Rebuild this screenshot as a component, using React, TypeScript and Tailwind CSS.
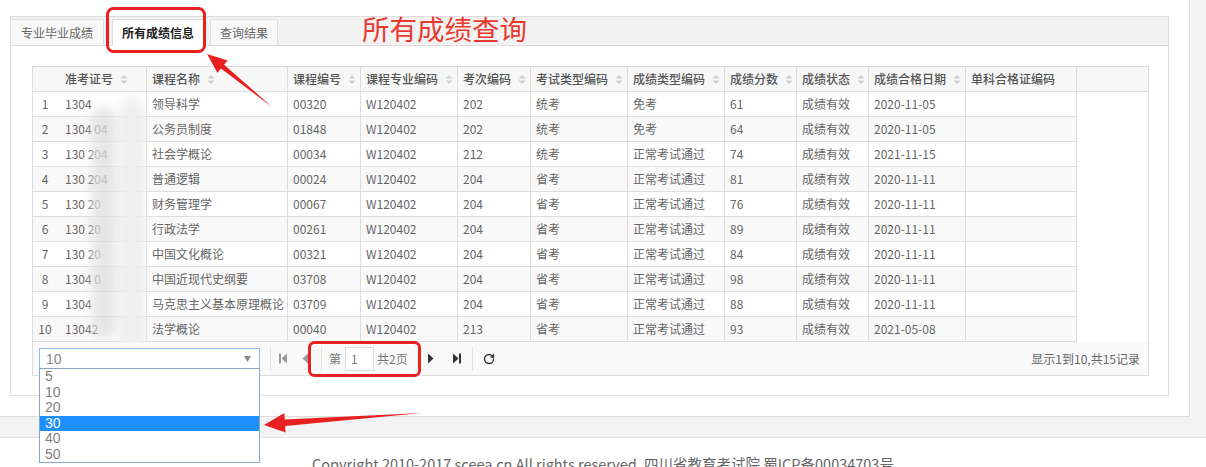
import React from "react";
import { RotateCw } from "lucide-react";

type Row = [string, string, string, string, string, string, string, string, string, string, string];

const rows: Row[] = [
  ["1", "1304", "领导科学", "00320", "W120402", "202", "统考", "免考", "61", "成绩有效", "2020-11-05"],
  ["2", "1304 04", "公务员制度", "01848", "W120402", "202", "统考", "免考", "64", "成绩有效", "2020-11-05"],
  ["3", "130 204", "社会学概论", "00034", "W120402", "212", "统考", "正常考试通过", "74", "成绩有效", "2021-11-15"],
  ["4", "130 204", "普通逻辑", "00024", "W120402", "204", "省考", "正常考试通过", "81", "成绩有效", "2020-11-11"],
  ["5", "130 20", "财务管理学", "00067", "W120402", "204", "省考", "正常考试通过", "76", "成绩有效", "2020-11-11"],
  ["6", "130 20", "行政法学", "00261", "W120402", "204", "省考", "正常考试通过", "89", "成绩有效", "2020-11-11"],
  ["7", "130 20", "中国文化概论", "00321", "W120402", "204", "省考", "正常考试通过", "84", "成绩有效", "2020-11-11"],
  ["8", "1304 0", "中国近现代史纲要", "03708", "W120402", "204", "省考", "正常考试通过", "98", "成绩有效", "2020-11-11"],
  ["9", "1304", "马克思主义基本原理概论", "03709", "W120402", "204", "省考", "正常考试通过", "88", "成绩有效", "2020-11-11"],
  ["10", "13042", "法学概论", "00040", "W120402", "213", "省考", "正常考试通过", "93", "成绩有效", "2021-05-08"],
];

const cols: { w: number; label: string; sort: boolean }[] = [
  { w: 24, label: "", sort: false },
  { w: 90, label: "准考证号", sort: true },
  { w: 141, label: "课程名称", sort: true },
  { w: 73, label: "课程编号", sort: true },
  { w: 97, label: "课程专业编码", sort: true },
  { w: 73, label: "考次编码", sort: true },
  { w: 97, label: "考试类型编码", sort: true },
  { w: 97, label: "成绩类型编码", sort: true },
  { w: 72, label: "成绩分数", sort: true },
  { w: 72, label: "成绩状态", sort: true },
  { w: 97, label: "成绩合格日期", sort: true },
  { w: 111, label: "单科合格证编码", sort: false },
];

function SortIcon() {
  return (
    <svg width="8" height="11" viewBox="0 0 8 11" className="ml-[7px] shrink-0">
      <path d="M0.5 4.5 L4 1 L7.5 4.5Z M0.5 6.5 L4 10 L7.5 6.5Z" fill="#d0d0d0" />
    </svg>
  );
}

function Sep() {
  return <div className="w-px h-[24px] bg-[#e2e2e2] shrink-0" />;
}

export default function App() {
  return (
    <div className="relative w-[1206px] h-[467px] overflow-hidden bg-white font-['Noto_Sans_CJK_SC','Microsoft_YaHei',sans-serif]">
      <div className="h-[438px] bg-[#f3f3f3] border-b border-[#e2e2e2]">
        <div className="w-[1190px] h-[417px] bg-white border-r border-b border-[#dddddd] pt-[16px] pl-[10px]">
          {/* panel */}
          <div className="w-[1159px] h-[380px] border border-[#dddddd] flex flex-col">
            {/* tabs */}
            <div className="h-[29px] bg-[#f2f2f2] border-b border-[#dddddd] flex items-end shrink-0">
              <div className="h-[27px] -mb-px -ml-px px-[10px] flex items-center border border-[#dddddd] bg-[#f8f8f8] text-[12px] text-[#666]">
                专业毕业成绩
              </div>
              <div className="h-[27px] -mb-px ml-[8px] px-[9px] flex items-center border border-[#dddddd] border-b-white bg-white text-[12px] font-bold text-[#222]">
                所有成绩信息
              </div>
              <div className="h-[27px] -mb-px ml-[6px] px-[9px] flex items-center border border-[#dddddd] bg-[#f8f8f8] text-[12px] text-[#666]">
                查询结果
              </div>
            </div>
            {/* body */}
            <div className="pt-[20px] pl-[21px]">
              <div className="relative w-[1117px] border border-[#dddddd] text-[12px]">
                {/* header */}
                <div className="flex h-[25px] bg-[#f7f7f7] border-b border-[#dddddd]">
                  {cols.map((c, i) => (
                    <div
                      key={i}
                      style={{ width: c.w }}
                      className={
                        "h-full flex items-center shrink-0 text-[#555] font-medium " +
                        (i === 0 ? "" : i === 1 ? "pl-[8px] border-r border-[#dddddd]" : "pl-[5px] border-r border-[#dddddd]")
                      }
                    >
                      {c.label}
                      {c.sort && <SortIcon />}
                    </div>
                  ))}
                  <div className="flex-1" />
                </div>
                {/* rows */}
                <div className="flex">
                  <div className="w-[1044px] shrink-0">
                    {rows.map((r, ri) => (
                      <div
                        key={ri}
                        className={"flex h-[25px] border-b border-[#dddddd] " + (ri % 2 === 1 ? "bg-[#f9f9f9]" : "bg-white")}
                      >
                        {cols.map((c, i) => (
                          <div
                            key={i}
                            style={{ width: c.w }}
                            className={
                              "h-full flex items-center shrink-0 text-[#666] whitespace-nowrap overflow-hidden " +
                              (i === 0
                                ? "justify-center"
                                : i === 1
                                ? "pl-[8px] border-r border-[#dddddd]"
                                : "pl-[5px] border-r border-[#dddddd]")
                            }
                          >
                            {i < 11 ? r[i] : ""}
                          </div>
                        ))}
                      </div>
                    ))}
                  </div>
                  <div className="flex-1 bg-white" />
                </div>
                {/* blur smudge over ids */}
                <div className="absolute left-[58px] top-[40px] w-[26px] h-[230px] rounded-full bg-[#e0e0e0] opacity-75 blur-[5px]" />
                <div className="absolute left-[86px] top-[30px] w-[26px] h-[255px] rounded-full bg-[#eeeeee] opacity-90 blur-[4px]" />
                {/* pager */}
                <div className="relative flex items-center h-[33px] bg-[#f9f9f9]">
                  <div className="relative ml-[6px] w-[221px] h-[21px] border border-[#8fbfea] bg-white flex items-center shrink-0">
                    <span className="pl-[6px] text-[14px] text-[#888] font-['Liberation_Sans',Arial,sans-serif] leading-none">10</span>
                    <svg width="7" height="6" viewBox="0 0 7 6" className="absolute right-[8px] top-[7px]">
                      <path d="M0 0 L7 0 L3.5 6Z" fill="#8a8a8a" />
                    </svg>
                    <div className="absolute left-[-1px] top-[19px] w-[221px] h-[95px] border border-[#8ea4c4] bg-white z-40 font-['Liberation_Sans',Arial,sans-serif] text-[14px]">
                      {["5", "10", "20", "30", "40", "50"].map((o) => (
                        <div
                          key={o}
                          className={
                            "h-[15.5px] leading-[15.5px] pl-[5px] " +
                            (o === "30" ? "bg-[#1e90ff] text-white" : "text-[#808080]")
                          }
                        >
                          {o}
                        </div>
                      ))}
                    </div>
                  </div>
                  <div className="ml-[10px]"><Sep /></div>
                  <svg width="8" height="11" viewBox="0 0 8 11" className="ml-[8px] shrink-0">
                    <rect x="0" y="0.5" width="2" height="10" fill="#9a9a9a" />
                    <path d="M8 0.5 L2.5 5.5 L8 10.5Z" fill="#9a9a9a" />
                  </svg>
                  <svg width="6" height="11" viewBox="0 0 6 11" className="ml-[15px] shrink-0">
                    <path d="M6 0.5 L0.5 5.5 L6 10.5Z" fill="#9a9a9a" />
                  </svg>
                  <div className="ml-[13px]"><Sep /></div>
                  <span className="ml-[7px] text-[#777]">第</span>
                  <div className="ml-[4px] w-[29px] h-[24px] border border-[#dddddd] bg-white flex items-center pl-[5px] text-[#777] shrink-0">
                    1
                  </div>
                  <span className="ml-[3px] text-[#777]">共2页</span>
                  <div className="ml-[12px]"><Sep /></div>
                  <svg width="6" height="11" viewBox="0 0 6 11" className="ml-[7px] shrink-0">
                    <path d="M0 0.5 L5.5 5.5 L0 10.5Z" fill="#333" />
                  </svg>
                  <svg width="8" height="11" viewBox="0 0 8 11" className="ml-[19px] shrink-0">
                    <path d="M0 0.5 L5.5 5.5 L0 10.5Z" fill="#333" />
                    <rect x="6" y="0.5" width="2" height="10" fill="#333" />
                  </svg>
                  <div className="ml-[11px]"><Sep /></div>
                  <RotateCw size={12} strokeWidth={2.6} color="#333" className="ml-[10px] shrink-0" />
                  <div className="flex-1" />
                  <span className="pr-[8px] text-[#666]">显示1到10,共15记录</span>
                </div>
              </div>
            </div>
          </div>
        </div>
      </div>
      {/* footer */}
      <div className="pt-[16px] text-center text-[14.5px] leading-[20px] text-[#666] whitespace-nowrap">
        Copyright 2010-2017 sceea.cn All rights reserved. 四川省教育考试院 蜀ICP备00034703号
      </div>
      {/* annotations */}
      <div className="absolute left-[362px] top-[14px] text-[27.5px] leading-[28px] text-[#ea3a30] whitespace-nowrap">
        所有成绩查询
      </div>
      <svg className="absolute left-0 top-0 pointer-events-none z-50" width="1206" height="467" viewBox="0 0 1206 467">
        <rect x="107.5" y="8.5" width="97" height="43" rx="6" fill="none" stroke="#e82020" strokeWidth="3" />
        <rect x="309.5" y="342.5" width="110" height="33" rx="5" fill="none" stroke="#e82020" strokeWidth="3" />
        <polygon points="207,54 217.4,72.8 220.9,68.5 272,107 224.1,64.7 227.6,60.4" fill="#e82020" />
        <polygon points="264,425 285.6,432.5 285.2,426 422,413 284.8,419.5 284.4,413" fill="#e82020" />
      </svg>
    </div>
  );
}
